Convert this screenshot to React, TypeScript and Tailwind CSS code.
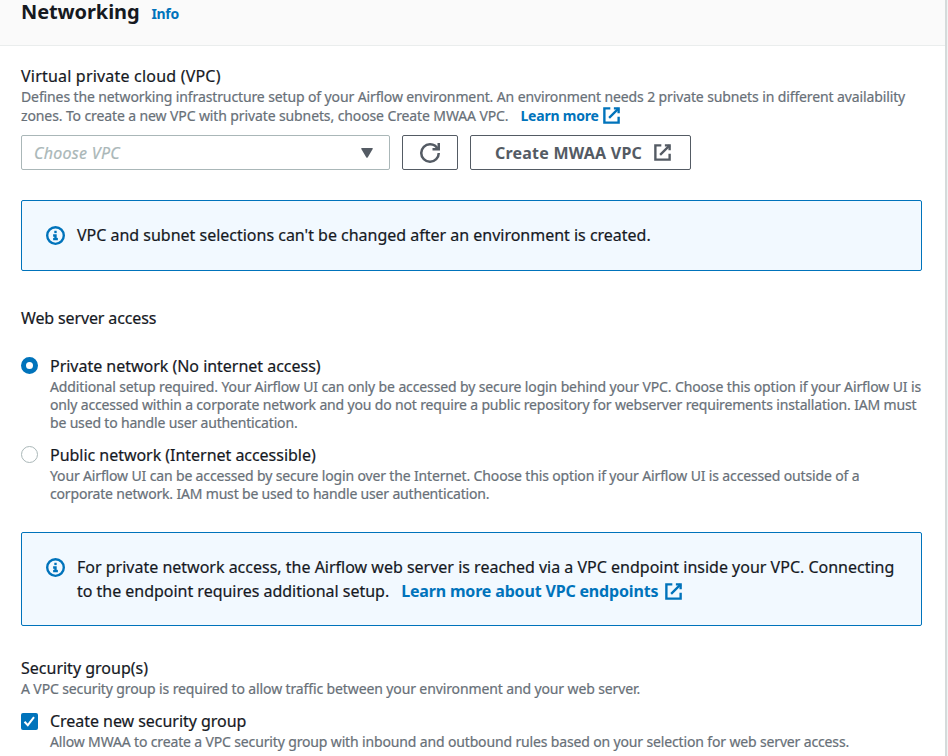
import type { ReactNode } from 'react';

function ExternalIcon({ className = '' }: { className?: string }) {
  return (
    <svg viewBox="0 0 16 16" className={`size-[19px] shrink-0 fill-none stroke-current stroke-2 ${className}`}>
      <path d="M10 2h4v4" />
      <path d="m6 10 8-8" />
      <path d="M14 9.048V14H2V2h5" />
    </svg>
  );
}

function RefreshIcon() {
  return (
    <svg viewBox="0 0 16 16" className="size-5 fill-none stroke-current stroke-2">
      <path d="M10 5h5V0" />
      <path d="M15 8a6.957 6.957 0 0 1-7 7 6.957 6.957 0 0 1-7-7 6.957 6.957 0 0 1 7-7 6.87 6.87 0 0 1 6.3 4" />
    </svg>
  );
}

function InfoIcon() {
  return (
    <svg viewBox="0 0 16 16" className="size-[19px] shrink-0 fill-none stroke-[#0073bb] stroke-2">
      <circle cx="8" cy="8" r="7" />
      <path d="M8 11V8H6" />
      <path d="M10 11H6" />
      <path d="M8 6V4" />
    </svg>
  );
}

function Label({ className = '', children }: { className?: string; children: ReactNode }) {
  return (
    <div className={`text-base leading-5 whitespace-nowrap [-webkit-text-stroke:0.2px] ${className}`}>{children}</div>
  );
}

function Hint({ className = '', children }: { className?: string; children: ReactNode }) {
  return (
    <div className={`text-sm whitespace-nowrap text-[#687078] [-webkit-text-stroke:0.2px] ${className}`}>
      {children}
    </div>
  );
}

function Alert({ className = '', children }: { className?: string; children: ReactNode }) {
  return (
    <div
      className={`flex gap-3 rounded-xs border border-[#0073bb] bg-[#f2f9ff] pl-6 text-base leading-6 whitespace-nowrap [-webkit-text-stroke:0.2px] ${className}`}
    >
      {children}
    </div>
  );
}

export default function App() {
  return (
    <div className="flex h-[756px] w-[948px] overflow-hidden bg-[#f2f3f3] font-['Noto_Sans',sans-serif] text-[#16191f]">
      <main className="h-full w-[947px] shrink-0 overflow-hidden border-r-2 border-[#d5dbdb] bg-white">
        <header className="flex h-[46px] items-start border-b border-[#eaeded] bg-[#fafafa] pl-[21px]">
          <h2 className="text-xl leading-6 font-bold tracking-[-0.1px]">Networking</h2>
          <a className="mt-1 ml-3 text-sm leading-5 font-bold tracking-[-0.35px] text-[#0073bb]">Info</a>
        </header>

        <div className="pr-[23px] pl-[21px]">
          <section className="pt-5">
            <Label className="tracking-[0.2px]">Virtual private cloud (VPC)</Label>
            <Hint className="mt-px leading-[19px]">
              <div className="tracking-[-0.118px]">
                Defines the networking infrastructure setup of your Airflow environment. An environment needs 2 private
                subnets in different availability
              </div>
              <div className="flex">
                <span className="tracking-[-0.112px]">
                  zones. To create a new VPC with private subnets, choose Create MWAA VPC.
                </span>
                <a className="ml-3 flex items-center font-bold tracking-[-0.2px] text-[#0073bb] [-webkit-text-stroke:0]">
                  Learn more
                  <ExternalIcon className="ml-[3px]" />
                </a>
              </div>
            </Hint>
            <div className="mt-2.5 flex h-[35px] gap-3">
              <div className="flex w-[369px] items-center justify-between rounded-xs border border-[#aab7b8] pr-4 pl-3 text-base text-[#aab7b8]">
                <span className="tracking-[0.3px] italic [-webkit-text-stroke:0.2px]">Choose VPC</span>
                <svg viewBox="0 0 12 10" className="h-2.5 w-3 fill-[#545b64]">
                  <path d="M0.8 0h10.4q1 0 .5.9L6.8 9.3q-.8 1-1.6 0L.3.9Q-.2 0 .8 0Z" />
                </svg>
              </div>
              <button className="flex w-14 items-center justify-center rounded-xs border border-[#545b64] text-[#545b64]">
                <RefreshIcon />
              </button>
              <button className="flex w-[221px] items-center rounded-xs border border-[#545b64] pl-6 text-base font-bold tracking-[0.22px] whitespace-nowrap text-[#545b64]">
                Create MWAA VPC
                <ExternalIcon className="ml-[11px]" />
              </button>
            </div>
          </section>

          <Alert className="mt-[30px] h-[71px] items-center">
            <InfoIcon />
            <span className="-mt-0.5 tracking-[-0.01px]">
              VPC and subnet selections can't be changed after an environment is created.
            </span>
          </Alert>

          <section className="pt-[37px]">
            <Label className="tracking-[-0.13px]">Web server access</Label>
            <div className="mt-7 flex gap-3">
              <span className="mt-px size-[17px] shrink-0 rounded-full border-5 border-[#0073bb]" />
              <div>
                <Label className="tracking-[-0.02px]">Private network (No internet access)</Label>
                <Hint className="mt-0.5 leading-[18px]">
                  <div className="tracking-[-0.128px]">
                    Additional setup required. Your Airflow UI can only be accessed by secure login behind your VPC.
                    Choose this option if your Airflow UI is
                  </div>
                  <div className="tracking-[-0.16px]">
                    only accessed within a corporate network and you do not require a public repository for webserver
                    requirements installation. IAM must
                  </div>
                  <div className="tracking-[-0.17px]">be used to handle user authentication.</div>
                </Hint>
              </div>
            </div>
            <div className="mt-[13px] flex gap-3">
              <span className="mt-px size-[17px] shrink-0 rounded-full border border-[#aab7b8]" />
              <div>
                <Label className="tracking-[-0.03px]">Public network (Internet accessible)</Label>
                <Hint className="mt-0.5 leading-[18px]">
                  <div className="tracking-[-0.147px]">
                    Your Airflow UI can be accessed by secure login over the Internet. Choose this option if your
                    Airflow UI is accessed outside of a
                  </div>
                  <div className="tracking-[-0.175px]">
                    corporate network. IAM must be used to handle user authentication.
                  </div>
                </Hint>
              </div>
            </div>
          </section>

          <Alert className="mt-[29px] h-[94px] pt-[22px]">
            <div className="mt-[3px]">
              <InfoIcon />
            </div>
            <div>
              <div>
                For private network access, the Airflow web server is reached via a VPC endpoint inside your VPC.
                Connecting
              </div>
              <div className="flex">
                <span className="tracking-[-0.02px]">to the endpoint requires additional setup.</span>
                <a className="ml-3 flex items-center font-bold tracking-[-0.17px] text-[#0073bb] [-webkit-text-stroke:0]">
                  Learn more about VPC endpoints
                  <ExternalIcon className="ml-1.5" />
                </a>
              </div>
            </div>
          </Alert>

          <section className="pt-8">
            <Label>Security group(s)</Label>
            <Hint className="mt-0.5 leading-[18px] tracking-[-0.12px]">
              A VPC security group is required to allow traffic between your environment and your web server.
            </Hint>
            <div className="mt-[13px] flex gap-3">
              <span className="mt-0.5 flex size-[17px] shrink-0 items-center justify-center rounded-xs bg-[#0073bb]">
                <svg viewBox="0 0 17 17" className="size-[17px] fill-none stroke-white stroke-2">
                  <path d="m3.5 8.8 3.3 3.4 6.2-8" />
                </svg>
              </span>
              <div>
                <Label className="tracking-[-0.04px]">Create new security group</Label>
                <Hint className="mt-0.5 leading-[18px] tracking-[-0.147px]">
                  Allow MWAA to create a VPC security group with inbound and outbound rules based on your selection for
                  web server access.
                </Hint>
              </div>
            </div>
          </section>
        </div>
      </main>
    </div>
  );
}
